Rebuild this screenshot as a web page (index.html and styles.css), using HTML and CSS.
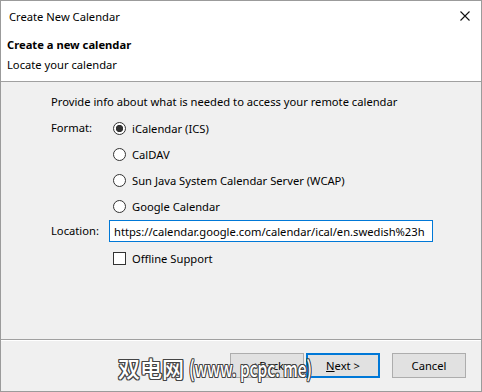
FILE: index.html
```html
<!DOCTYPE html>
<html>
<head>
    <meta charset="UTF-8">
    <meta name="viewport" content="width=device-width, initial-scale=1.0">
    <title>Create New Calendar</title>
    <link rel="stylesheet" href="styles.css">
</head>
<body>

    <div class="dialog">
        <div class="titleBar">
            <span class="titleText">Create New Calendar</span>
            <svg class="closeIcon" width="10" height="10" viewBox="0 0 10 10">
                <path d="M0.5 0.5 L9.5 9.5 M9.5 0.5 L0.5 9.5" stroke="#111" stroke-width="1.1" fill="none"/>
            </svg>
        </div>

        <div class="header">
            <div class="headerTitle">Create a new calendar</div>
            <div class="headerSub">Locate your calendar</div>
        </div>

        <div class="content">
            <div class="intro">Provide info about what is needed to access your remote calendar</div>

            <div class="formGrid">
                <label class="fieldLabel">Format:</label>
                <div class="radioList">
                    <label class="choice"><input type="radio" name="format" checked> iCalendar (ICS)</label>
                    <label class="choice"><input type="radio" name="format"> CalDAV</label>
                    <label class="choice"><input type="radio" name="format"> Sun Java System Calendar Server (WCAP)</label>
                    <label class="choice"><input type="radio" name="format"> Google Calendar</label>
                </div>

                <label class="fieldLabel locLabel" for="location">Location:</label>
                <input type="text" id="location" class="locInput" value="https://calendar.google.com/calendar/ical/en.swedish%23h">

                <div></div>
                <label class="choice offline"><input type="checkbox"> Offline Support</label>
            </div>
        </div>

        <div class="footer">
            <button class="btn">&lt; Back</button>
            <button class="btn btnDefault"><u>N</u>ext &gt;</button>
            <button class="btn btnCancel">Cancel</button>
        </div>

        <div class="watermark">双电网 <span class="wmLatin">(www. pcpc. me)</span></div>
    </div>

</body>
</html>
```

FILE: styles.css
```css
body {
    margin: 0;
    padding: 0;
    width: 482px;
    height: 392px;
    font-family: "Noto Sans", "Open Sans", sans-serif;
    font-size: 11.2px;
    color: #000;
    background-color: #fff;
}

.dialog {
    position: relative;
    width: 482px;
    height: 392px;
    box-sizing: border-box;
    border: 1px solid #9b9b9b;
    display: flex;
    flex-direction: column;
    background-color: #f0f0f0;
    overflow: hidden;
}

.titleBar {
    height: 30px;
    background-color: #fff;
    display: flex;
    align-items: center;
    justify-content: space-between;
    padding: 0 11px 0 8px;
}

.closeIcon {
    display: block;
}

.header {
    background-color: #fff;
    padding: 4px 6px 6px;
    border-bottom: 1px solid #a0a0a0;
}

.headerTitle,
.headerSub {
    height: 20px;
    line-height: 20px;
}

.headerTitle {
    font-weight: 700;
}

.content {
    flex: 1;
    padding: 10px 0 0 50px;
    border-bottom: 1px solid #a0a0a0;
}

.intro {
    line-height: 20px;
    height: 20px;
}

.formGrid {
    display: grid;
    grid-template-columns: 58px auto;
    margin-top: 3px;
}

.fieldLabel {
    line-height: 26px;
    height: 26px;
}

.radioList {
    display: flex;
    flex-direction: column;
}

.choice {
    height: 26px;
    display: flex;
    align-items: center;
    column-gap: 6px;
    padding-left: 4px;
}

input[type="radio"],
input[type="checkbox"] {
    appearance: none;
    -webkit-appearance: none;
    margin: 0;
    width: 13px;
    height: 13px;
    box-sizing: border-box;
    border: 1px solid #333;
    background-color: #fff;
    flex-shrink: 0;
}

input[type="radio"] {
    border-radius: 50%;
}

input[type="radio"]:checked {
    background: radial-gradient(circle, #333 0 3.4px, #fff 3.9px);
}

.locLabel {
    margin-top: 1px;
    line-height: 22px;
    height: 22px;
}

.locInput {
    margin-top: 1px;
    width: 324px;
    height: 22px;
    box-sizing: border-box;
    border: 1px solid #0078d7;
    padding: 0 0 0 4px;
    font-family: inherit;
    font-size: 11.2px;
    color: #000;
    background-color: #fff;
    outline: none;
}

.offline {
    margin-top: 3px;
}

.footer {
    border-top: 1px solid #fff;
    height: 51px;
    display: flex;
    align-items: flex-start;
    padding: 12px 15px 0 0;
    justify-content: flex-end;
    box-sizing: border-box;
}

.btn {
    width: 74px;
    height: 25px;
    box-sizing: border-box;
    border: 1px solid #adadad;
    background-color: #e1e1e1;
    font-family: inherit;
    font-size: 11.2px;
    color: #000;
    padding: 0;
    margin: 0;
}

.btnDefault {
    border: 2px solid #0078d7;
    margin-left: 2px;
}

.btnCancel {
    margin-left: 12px;
}

.watermark {
    position: absolute;
    left: 117px;
    top: 352px;
    font-family: "Noto Sans CJK SC", sans-serif;
    font-size: 22px;
    font-weight: 500;
    line-height: 28px;
    color: #fff;
    white-space: nowrap;
    text-shadow: 1px 0 0 #444, -1px 0 0 #444, 0 1px 0 #444, 0 -1px 0 #444,
                 1px 1px 0 #444, -1px -1px 0 #444, 1px -1px 0 #444, -1px 1px 0 #444;
}

.wmLatin {
    display: inline-block;
    transform: scaleX(0.7);
    transform-origin: left center;
}
```
